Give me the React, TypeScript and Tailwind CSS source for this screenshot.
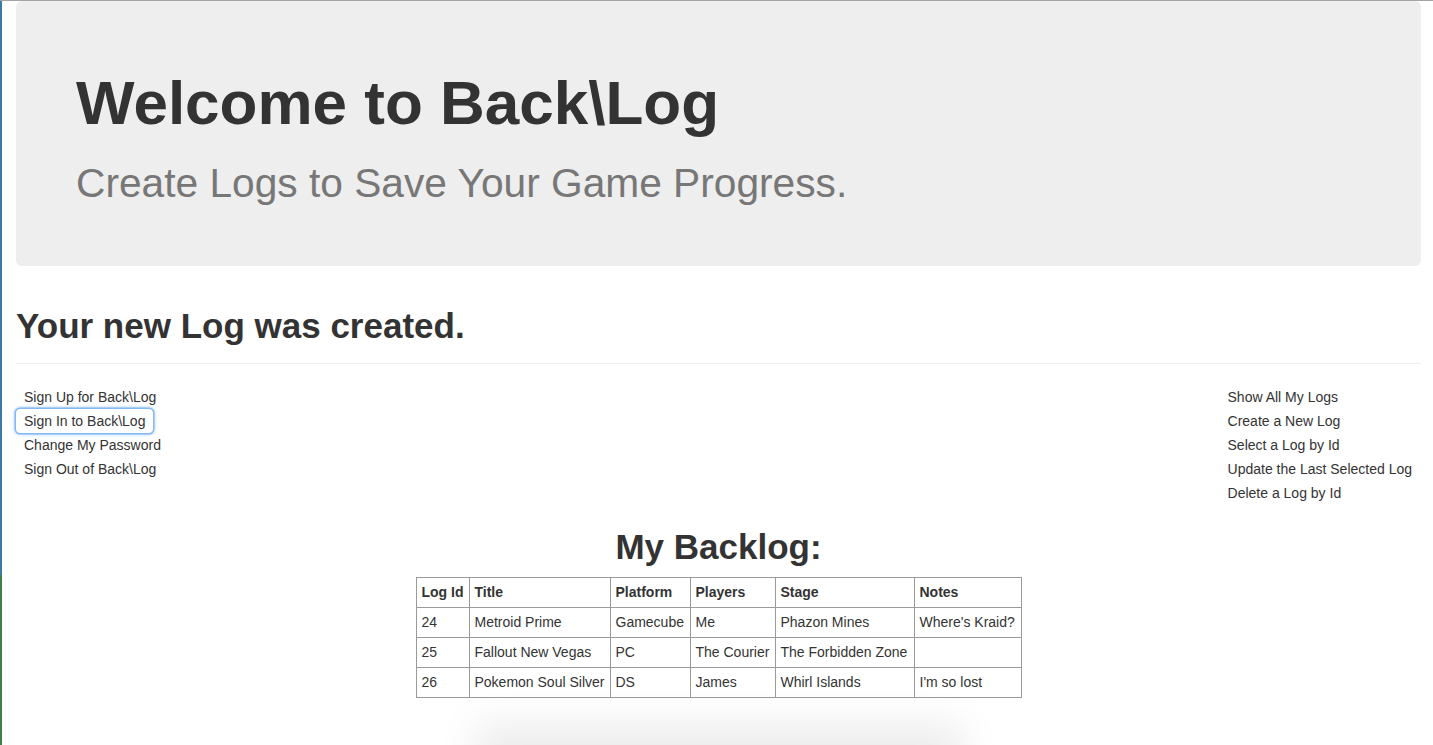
import React from "react";

type Log = {
    id: number;
    title: string;
    platform: string;
    players: string;
    stage: string;
    notes: string;
};

const logs: Log[] = [
    { id: 24, title: "Metroid Prime", platform: "Gamecube", players: "Me", stage: "Phazon Mines", notes: "Where's Kraid?" },
    { id: 25, title: "Fallout New Vegas", platform: "PC", players: "The Courier", stage: "The Forbidden Zone", notes: "" },
    { id: 26, title: "Pokemon Soul Silver", platform: "DS", players: "James", stage: "Whirl Islands", notes: "I'm so lost" },
];

const authButtons = ["Sign Up for Back\\Log", "Sign In to Back\\Log", "Change My Password", "Sign Out of Back\\Log"];
const logButtons = ["Show All My Logs", "Create a New Log", "Select a Log by Id", "Update the Last Selected Log", "Delete a Log by Id"];

const NavButton = ({ label, focused }: { label: string; focused?: boolean }) => (
    <button
        className={
            "block text-left text-[14px] leading-[24px] px-[8px] text-[#333] rounded-[4px] bg-transparent" +
            (focused ? " shadow-[0_0_0_1.5px_#86b8f6,0_0_3px_2px_#b9d6fa]" : "")
        }
    >
        {label}
    </button>
);

const LogTable = () => {
    const cell = "border border-[#9a9a9a] h-[30px] px-[5px] text-left align-middle whitespace-nowrap";
    return (
        <table className="mx-auto border-collapse table-fixed text-[14px] leading-[20px] w-[606px]">
            <colgroup>
                <col className="w-[53px]" />
                <col className="w-[141px]" />
                <col className="w-[80px]" />
                <col className="w-[85px]" />
                <col className="w-[139px]" />
                <col className="w-[107px]" />
            </colgroup>
            <thead>
                <tr>
                    {["Log Id", "Title", "Platform", "Players", "Stage", "Notes"].map((h) => (
                        <th key={h} className={cell + " font-bold"}>
                            {h}
                        </th>
                    ))}
                </tr>
            </thead>
            <tbody>
                {logs.map((l) => (
                    <tr key={l.id}>
                        <td className={cell}>{l.id}</td>
                        <td className={cell}>{l.title}</td>
                        <td className={cell}>{l.platform}</td>
                        <td className={cell}>{l.players}</td>
                        <td className={cell}>{l.stage}</td>
                        <td className={cell}>{l.notes}</td>
                    </tr>
                ))}
            </tbody>
        </table>
    );
};

export default function App() {
    return (
        <div className="h-[745px] overflow-hidden bg-white font-['Liberation_Sans',Arial,sans-serif] text-[#333] border-t border-[#a3a3a3] flex">
            <div className="w-[2px] flex flex-col shrink-0">
                <div className="h-[574px] bg-[#3c7aa8]" />
                <div className="flex-1 bg-[#3f8049]" />
            </div>
            <div className="flex-1 pl-[14px] pr-[12px]">
                <div className="rounded-[6px] bg-[#eee] px-[60px] pt-[48px] pb-[48px]">
                    <h1 className="mt-[21px] mb-[25px] text-[62px] leading-[66px] font-bold">Welcome to Back\Log</h1>
                    <h2 className="mb-[12px] text-[40.7px] leading-[1.1] text-[#777]">
                        Create Logs to Save Your Game Progress.
                    </h2>
                </div>

                <h1 className="mt-[41px] text-[35px] leading-[1.1] font-bold">Your new Log was created.</h1>
                <hr className="mt-[18px] border-t border-[#eee]" />

                <div className="mt-[21px] flex justify-between">
                    <div className="flex flex-col items-start">
                        {authButtons.map((b, i) => (
                            <NavButton key={b} label={b} focused={i === 1} />
                        ))}
                    </div>
                    <div className="flex flex-col items-start pr-[1px]">
                        {logButtons.map((b) => (
                            <NavButton key={b} label={b} />
                        ))}
                    </div>
                </div>

                <h1 className="mt-[23px] mb-[10px] text-center text-[35px] leading-[1.1] font-bold">My Backlog:</h1>
                <LogTable />

                <div className="mx-auto mt-[50px] h-[60px] w-[440px] bg-[#e6e6e6] shadow-[0_0_40px_24px_rgba(0,0,0,0.08)]" />
            </div>
        </div>
    );
}
